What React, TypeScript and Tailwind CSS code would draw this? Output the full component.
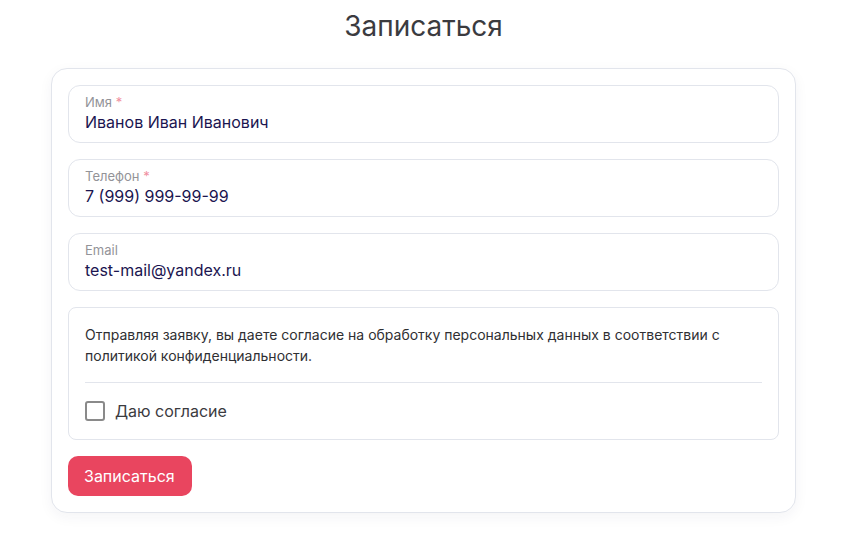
import React from "react";

function Field({ label, value, required }: { label: string; value: string; required?: boolean }) {
  return (
    <div className="rounded-[12px] border border-[#e2e5ec] px-4 py-2">
      <div className="text-[13px] leading-4 text-[#939398]">
        {label}
        {required && <span className="text-[#f0909f]"> *</span>}
      </div>
      <div className="text-[16px] leading-6 text-[#1b1550]">{value}</div>
    </div>
  );
}

export default function App() {
  return (
    <div className="min-h-[536px] bg-white" style={{ fontFamily: "Inter, 'Noto Sans', sans-serif" }}>
      <div className="ml-[51px] w-[745px]">
        <h1 className="pt-[8px] text-center text-[28px] leading-[36px] text-[#3b3b3f]">Записаться</h1>
        <div className="mt-[24px] flex flex-col gap-4 rounded-[16px] border border-[#e2e5ec] bg-white p-4 shadow-[0_4px_14px_rgba(30,40,80,0.05)]">
          <Field label="Имя" value="Иванов Иван Иванович" required />
          <Field label="Телефон" value="7 (999) 999-99-99" required />
          <Field label="Email" value="test-mail@yandex.ru" />
          <div className="rounded-[8px] border border-[#e2e5ec] px-4">
            <p className="pt-4 pb-4 text-[14px] leading-[21px] text-[#2f2f33]">
              Отправляя заявку, вы даете согласие на обработку персональных данных в соответствии с политикой конфиденциальности.
            </p>
            <div className="h-px bg-[#e2e5ec]" />
            <label className="flex items-center gap-[10px] py-4">
              <span className="block h-[20px] w-[20px] rounded-[3px] border-2 border-[#8a8a8a]" />
              <span className="text-[16px] leading-6 text-[#3b3b3f]">Даю согласие</span>
            </label>
          </div>
          <div>
            <button className="h-10 rounded-[10px] bg-[#e9455f] pl-4 pr-[17px] text-[16px] text-white">Записаться</button>
          </div>
        </div>
      </div>
    </div>
  );
}
